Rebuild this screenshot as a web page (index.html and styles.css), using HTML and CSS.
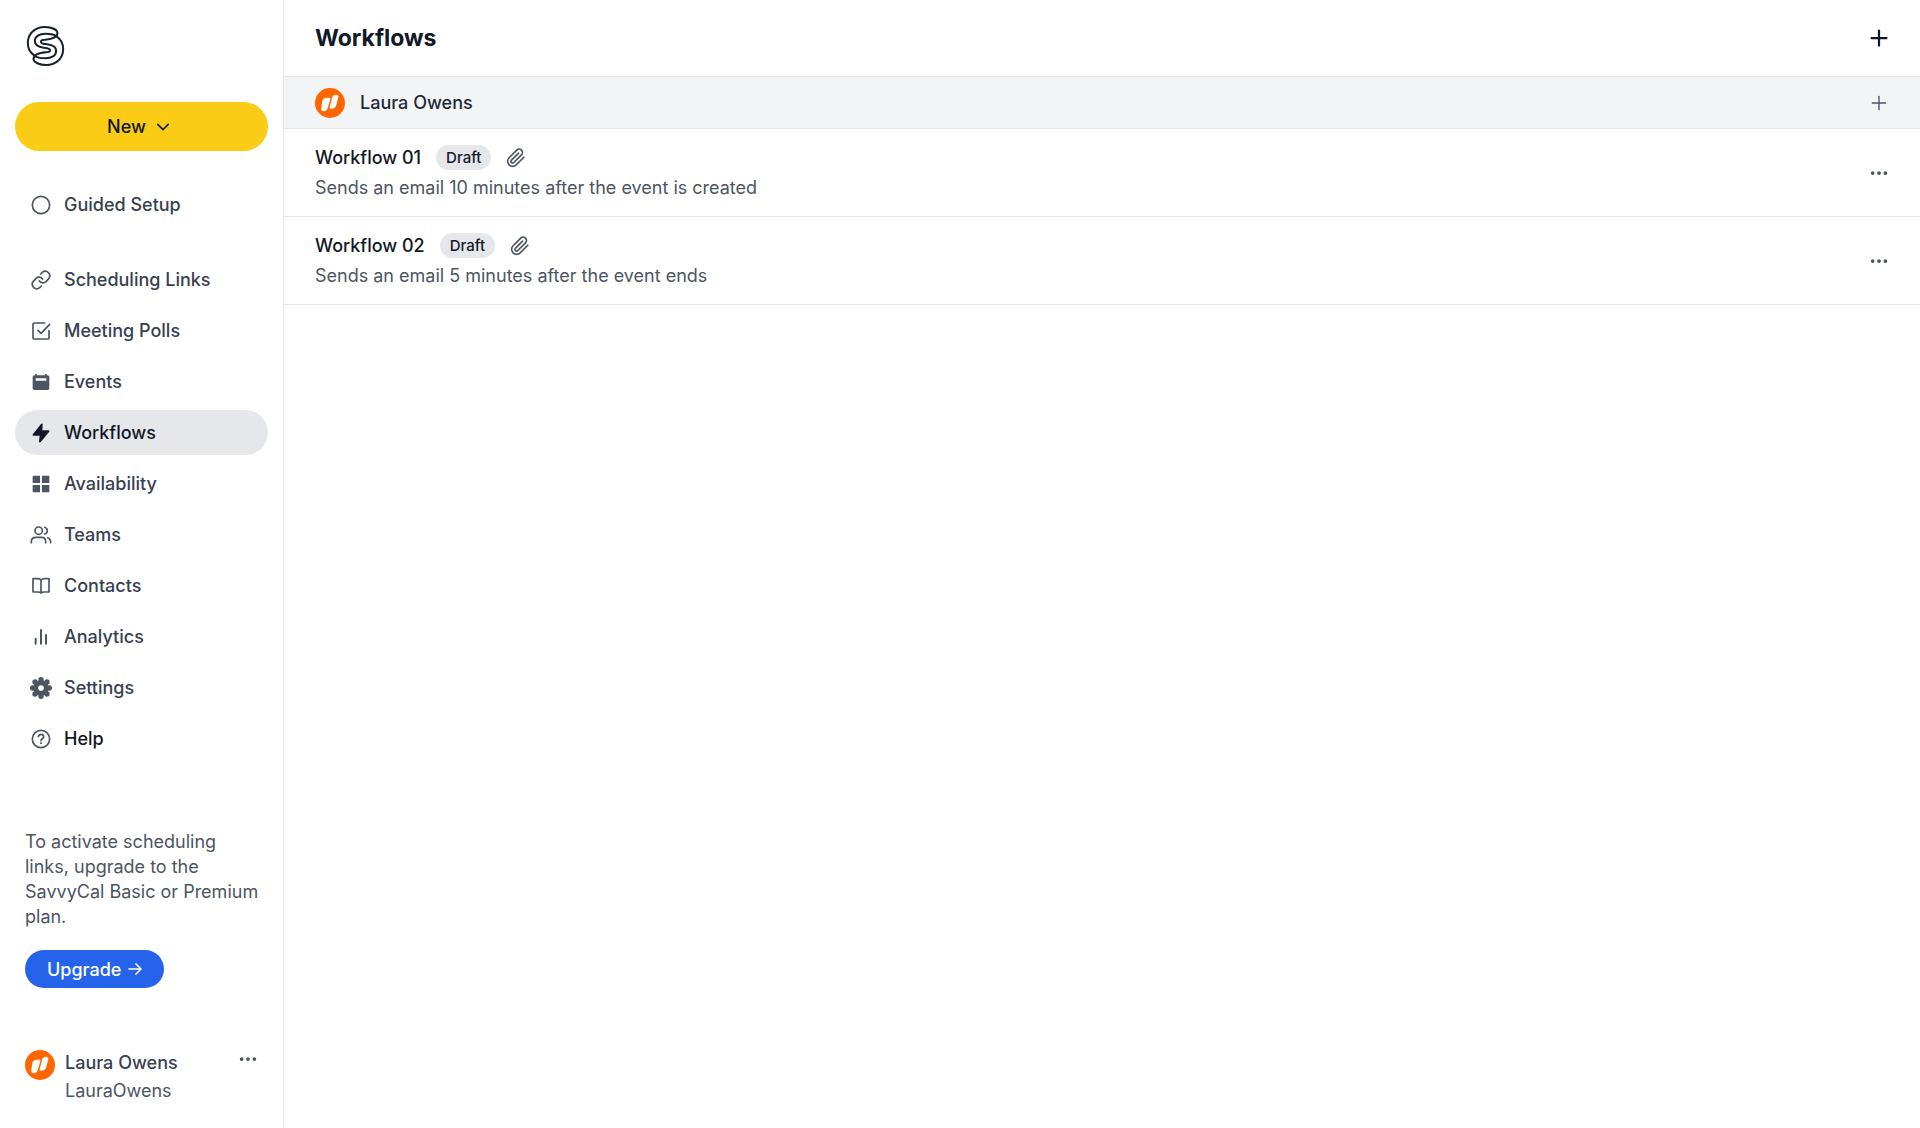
FILE: index.html
```html
<!DOCTYPE html>
<html lang="en">
<head>
<meta charset="utf-8">
<meta name="viewport" content="width=device-width, initial-scale=1">
<title>Workflows</title>
<link rel="stylesheet" href="styles.css">
</head>
<body>
<svg class="symbols" aria-hidden="true">
  <symbol id="avatar" viewBox="0 0 90 90">
    <circle cx="45" cy="45" r="45" fill="#ff6600"/>
    <path d="M22 38Q25 29 34 29H43Q47 29 46 33L38 61Q35 70 27 70Q17 70 19 60ZM52 27Q55 20 63 20Q71 20 70 28L63 54Q60 62 51 62H46Q43 62 44 58Z" fill="#fff"/>
  </symbol>
  <symbol id="plus" viewBox="-12 -12 24 24">
    <path d="M-10 0H10M0-10V10"/>
  </symbol>
  <symbol id="dots" viewBox="-24 -24 48 48">
    <g fill="currentColor" stroke="none"><circle cx="-17" r="5"/><circle r="5"/><circle cx="17" r="5"/></g>
  </symbol>
  <symbol id="clip" viewBox="0 0 24 24">
    <path d="M21.4 11.1l-9.2 9.1a6 6 0 0 1-8.5-8.5l9.2-9.2a4 4 0 0 1 5.7 5.7l-9.2 9.2a2 2 0 0 1-2.8-2.9l8.5-8.4"/>
  </symbol>
</svg>
<div class="app">
  <aside class="sidebar">
    <a class="logo" href="#" aria-label="SavvyCal">
      <svg viewBox="79 77 116 120">
        <path id="half" d="M103 165C90 156 84 143 84 128C84 100 105 80 135 80C155 80 173 88 173 98C173 109 160 116 136 118C127 118 123 120 123 124C123 130 132 131 142 132C160 134 169 142 169 152C169 166 155 174 137 174C120 174 108 170 103 165"/>
        <use href="#half" transform="rotate(180 137 137)"/>
      </svg>
    </a>
    <button class="new" type="button">New
      <svg viewBox="0 0 24 24" aria-hidden="true"><path d="M5 8.500l7 7 7-7"/></svg>
    </button>
    <nav class="nav" aria-label="Main">
      <a class="item setup" href="#"><svg viewBox="-33 -33 66 66"><circle r="26"/></svg>Guided Setup</a>
      <a class="item" href="#"><svg viewBox="-33 -33 66 66"><path d="M-5 3a13.500 13.500 0 0 0 20 2L23-4A13.500 13.500 0 0 0 4-23L-1-18M5-3a13.500 13.500 0 0 0-20-2L-23 4A13.500 13.500 0 0 0-4 23L1 18"/></svg>Scheduling Links</a>
      <a class="item" href="#"><svg viewBox="-33 -33 66 66"><path d="M11-24H-20Q-24-24-24-20V20Q-24 24-20 24H20Q24 24 24 20V-1M-9-2L0 7L26-20"/></svg>Meeting Polls</a>
      <a class="item" href="#"><svg viewBox="-33 -33 66 66"><path class="solid" fill-rule="evenodd" d="M-25-15Q-25-20-20-20H-17V-24H-12V-20H12V-24H17V-20H20Q25-20 25-15V19Q25 24 20 24H-20Q-25 24-25 19ZM-16-11V-4H16V-11Z"/></svg>Events</a>
      <a class="item current" href="#" aria-current="page"><svg viewBox="-33 -33 66 66"><path class="solid" d="M0-27Q5-31 5-25L4-8H22Q28-8 24-3L0 26Q-6 31-6 25L-4 8H-22Q-28 8-24 3Z"/></svg>Workflows</a>
      <a class="item" href="#"><svg viewBox="-33 -33 66 66"><path class="solid" d="M-24-25H-3V-3H-25V-24ZM3-25H25V-3H3ZM-25 3H-3V25H-25ZM3 3H25V25H3Z"/></svg>Availability</a>
      <a class="item" href="#"><svg viewBox="-33 -33 66 66"><circle cx="-7" cy="-13" r="11"/><path d="M-29 23V20Q-29 7-16 7H2Q14 7 14 20V23M11-23Q19-20 19-13T11-3M20 8Q29 11 29 23"/></svg>Teams</a>
      <a class="item" href="#"><svg viewBox="-33 -33 66 66"><path d="M0-17Q-3-22-10-22H-24V18H-9Q-2 18 0 21Q2 18 9 18H24V-22H10Q3-22 0-17V21"/></svg>Contacts</a>
      <a class="item" href="#"><svg class="heavy" viewBox="-33 -33 66 66"><path d="M-16 5V20M0-21V20M15-6V20"/></svg>Analytics</a>
      <a class="item" href="#"><svg viewBox="-33 -33 66 66"><circle class="ring" r="16"/><g class="solid"><circle cx="25" r="8"/><circle cx="-25" r="8"/><circle cy="25" r="8"/><circle cy="-25" r="8"/><circle cx="18" cy="18" r="8"/><circle cx="-18" cy="18" r="8"/><circle cx="18" cy="-18" r="8"/><circle cx="-18" cy="-18" r="8"/></g></svg>Settings</a>
      <a class="item help" href="#"><svg viewBox="-33 -33 66 66"><circle r="26"/><path d="M-8-7Q-7-14 0-14Q8-14 8-7Q8-3 3 0Q0 2 0 5"/><circle class="solid" cy="13" r="3"/></svg>Help</a>
    </nav>
    <section class="plan">
      <p>To activate scheduling links, upgrade to the SavvyCal Basic or Premium plan.</p>
      <a class="upgrade" href="#">Upgrade <svg viewBox="0 0 42 42" aria-hidden="true"><path d="M3 21H38M24 6L39 21L24 36"/></svg></a>
    </section>
    <div class="account">
      <svg class="avatar" aria-hidden="true"><use href="#avatar"/></svg>
      <div class="who"><span class="name">Laura Owens</span><span class="handle">LauraOwens</span></div>
      <button class="icon-button" type="button" aria-label="Account menu"><svg><use href="#dots"/></svg></button>
    </div>
  </aside>
  <main class="main">
    <header class="header">
      <h1>Workflows</h1>
      <button class="icon-button add" type="button" aria-label="New workflow"><svg><use href="#plus"/></svg></button>
    </header>
    <div class="owner">
      <svg class="avatar" aria-hidden="true"><use href="#avatar"/></svg>
      <h2>Laura Owens</h2>
      <button class="icon-button add-small" type="button" aria-label="New workflow for Laura Owens"><svg><use href="#plus"/></svg></button>
    </div>
    <ul class="list">
      <li class="row">
        <div class="text">
          <div class="title"><a href="#">Workflow 01</a><span class="badge">Draft</span><svg class="clip" aria-hidden="true"><use href="#clip"/></svg></div>
          <p>Sends an email 10 minutes after the event is created</p>
        </div>
        <button class="icon-button" type="button" aria-label="Workflow 01 menu"><svg><use href="#dots"/></svg></button>
      </li>
      <li class="row">
        <div class="text">
          <div class="title"><a href="#">Workflow 02</a><span class="badge">Draft</span><svg class="clip" aria-hidden="true"><use href="#clip"/></svg></div>
          <p>Sends an email 5 minutes after the event ends</p>
        </div>
        <button class="icon-button" type="button" aria-label="Workflow 02 menu"><svg><use href="#dots"/></svg></button>
      </li>
    </ul>
  </main>
</div>
</body>
</html>
```
FILE: styles.css
```css
* { box-sizing: border-box; }
body {
  margin: 0;
  font-family: Inter, "Liberation Sans", sans-serif;
  font-size: 18px;
  line-height: 25px;
  color: #111827;
  background: #fff;
}
h1, h2, p, ul { margin: 0; padding: 0; }
a { color: inherit; text-decoration: none; }
button { font: inherit; color: inherit; border: 0; padding: 0; background: none; cursor: pointer; }
svg {
  display: block;
  flex: none;
  fill: none;
  stroke: currentColor;
  stroke-linecap: round;
  stroke-linejoin: round;
}
.symbols { position: absolute; width: 0; height: 0; }
.app { display: flex; min-height: 100vh; }

.sidebar {
  flex: none;
  display: flex;
  flex-direction: column;
  width: 284px;
  padding: 26px 15px 25px;
  border-right: 1px solid #e5e7eb;
}
.logo { align-self: flex-start; margin-left: 11px; color: #17212d; }
.logo svg { width: 39px; height: 40px; stroke-width: 6; }
.new {
  display: flex;
  align-items: center;
  justify-content: center;
  gap: 8px;
  height: 49px;
  margin-top: 36px;
  padding-right: 4px;
  border-radius: 25px;
  background: #facc15;
  font-weight: 500;
}
.new svg { width: 18px; height: 18px; stroke-width: 2; }
.nav { display: flex; flex-direction: column; gap: 6px; margin-top: 31px; }
.item {
  display: flex;
  align-items: center;
  gap: 12px;
  height: 45px;
  padding: 0 15px;
  border-radius: 23px;
  font-weight: 500;
  color: #374151;
}
.item svg { width: 22px; height: 22px; stroke-width: 5; color: #4b5563; }
.item svg.heavy { stroke-width: 6; }
.item .solid { fill: currentColor; stroke: none; }
.item .ring { stroke-width: 15; }
.setup { margin-bottom: 24px; }
.current { background: #e5e7eb; color: #111827; }
.item.current svg { color: #111827; }
.help { color: #111827; }

.plan { margin-top: auto; padding: 0 5px 0 10px; color: #4b5563; }
.upgrade {
  display: inline-flex;
  align-items: center;
  gap: 7px;
  height: 38px;
  margin-top: 21px;
  padding: 0 22px;
  border-radius: 19px;
  background: #2563eb;
  color: #fff;
  font-weight: 500;
}
.upgrade svg { width: 14px; height: 14px; stroke-width: 5; }
.account { display: flex; align-items: flex-start; gap: 10px; margin-top: 62px; padding: 0 11px 0 10px; }
.avatar { width: 30px; height: 30px; stroke: none; }
.who { flex: 1; display: flex; flex-direction: column; gap: 3px; }
.name { font-weight: 500; color: #374151; }
.handle { color: #4b5563; }
.icon-button { flex: none; display: flex; color: #4b5563; }
.icon-button svg { width: 18px; height: 18px; }

.main { flex: 1; min-width: 0; }
.header, .owner, .row {
  display: flex;
  align-items: center;
  justify-content: space-between;
  padding: 0 32px 0 31px;
  border-bottom: 1px solid #e5e7eb;
}
.header { height: 77px; }
h1 { font-size: 23px; line-height: 30px; font-weight: 700; }
.add { color: #111827; }
.add svg { stroke-width: 3; }
.owner { gap: 15px; height: 52px; background: #f3f4f6; }
.owner h2 { flex: 1; font-size: 18px; font-weight: 500; color: #1f2937; }
.add-small svg { padding: 1px; stroke-width: 2; }
.list { list-style: none; }
.row { padding-top: 16px; padding-bottom: 16px; }
.text { display: flex; flex-direction: column; gap: 5px; }
.title { display: flex; align-items: center; gap: 15px; font-weight: 500; }
.row p { color: #4b5563; }
.badge { padding: 0 10px; border-radius: 13px; background: #e5e7eb; font-size: 15px; }
.clip { width: 20px; height: 20px; stroke-width: 2; color: #4b5563; }
```
